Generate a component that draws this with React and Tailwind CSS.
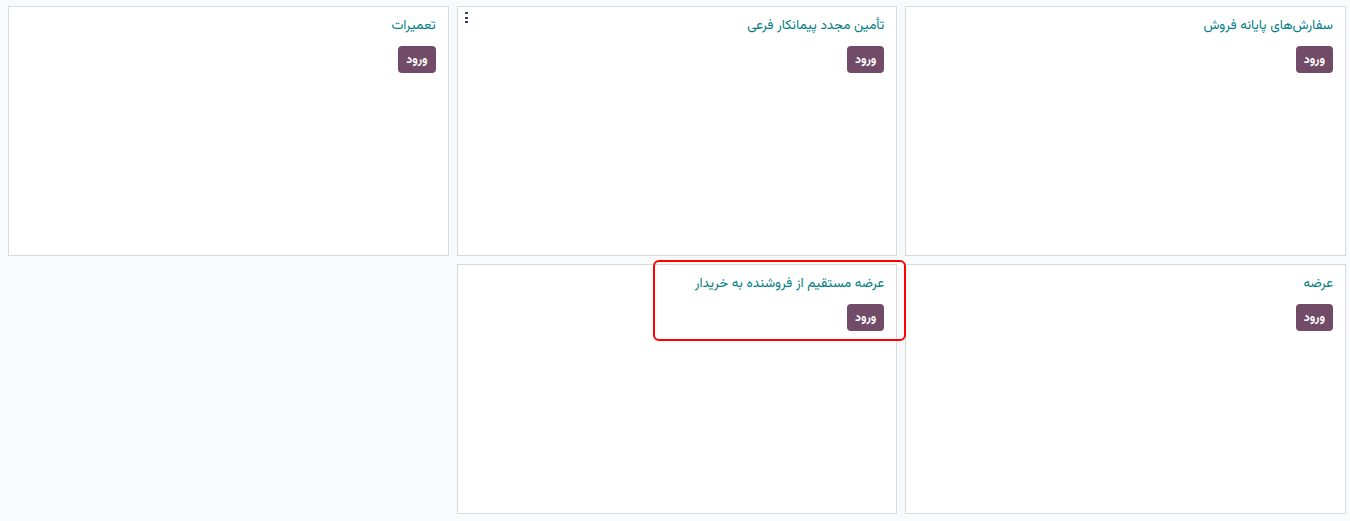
import React from "react";

const cards = [
  { title: "سفارش‌های پایانه فروش" },
  { title: "تأمین مجدد پیمانکار فرعی", menu: true },
  { title: "تعمیرات" },
  { title: "عرضه" },
  { title: "عرضه مستقیم از فروشنده به خریدار", highlight: true },
];

function Card({ title, menu, highlight }) {
  return (
    <div className="relative h-[250px] border border-[#d8dadd] bg-white px-3 pt-[8px]">
      <div className="text-[13.5px] leading-[21px] text-[#017e84]">{title}</div>
      <div className="mt-[10px] flex">
        <button className="h-[27px] rounded-[4px] bg-[#714b67] px-[8px] text-[12px] font-bold text-white">
          ورود
        </button>
      </div>
      {menu && (
        <div className="absolute left-[7px] top-[5px] flex h-[11px] w-[4px] flex-col items-center justify-between">
          <span className="block h-[2px] w-[3px] bg-[#374151]" />
          <span className="block h-[2px] w-[3px] bg-[#374151]" />
          <span className="block h-[2px] w-[3px] bg-[#374151]" />
        </div>
      )}
      {highlight && (
        <div className="pointer-events-none absolute right-[-10px] top-[-5px] h-[81px] w-[253px] rounded-[6px] border-2 border-[#ff0000]" />
      )}
    </div>
  );
}

export default function App() {
  return (
    <div
      dir="rtl"
      className="min-h-[521px] bg-[#f9fafb] pl-2 pr-1 pt-[6px]"
      style={{ fontFamily: '"Vazirmatn", "Noto Sans Arabic", "Noto Naskh Arabic", "DejaVu Sans", sans-serif' }}
    >
      <div className="grid grid-cols-3 gap-2">
        {cards.map((c, i) => (
          <Card key={i} {...c} />
        ))}
      </div>
    </div>
  );
}
